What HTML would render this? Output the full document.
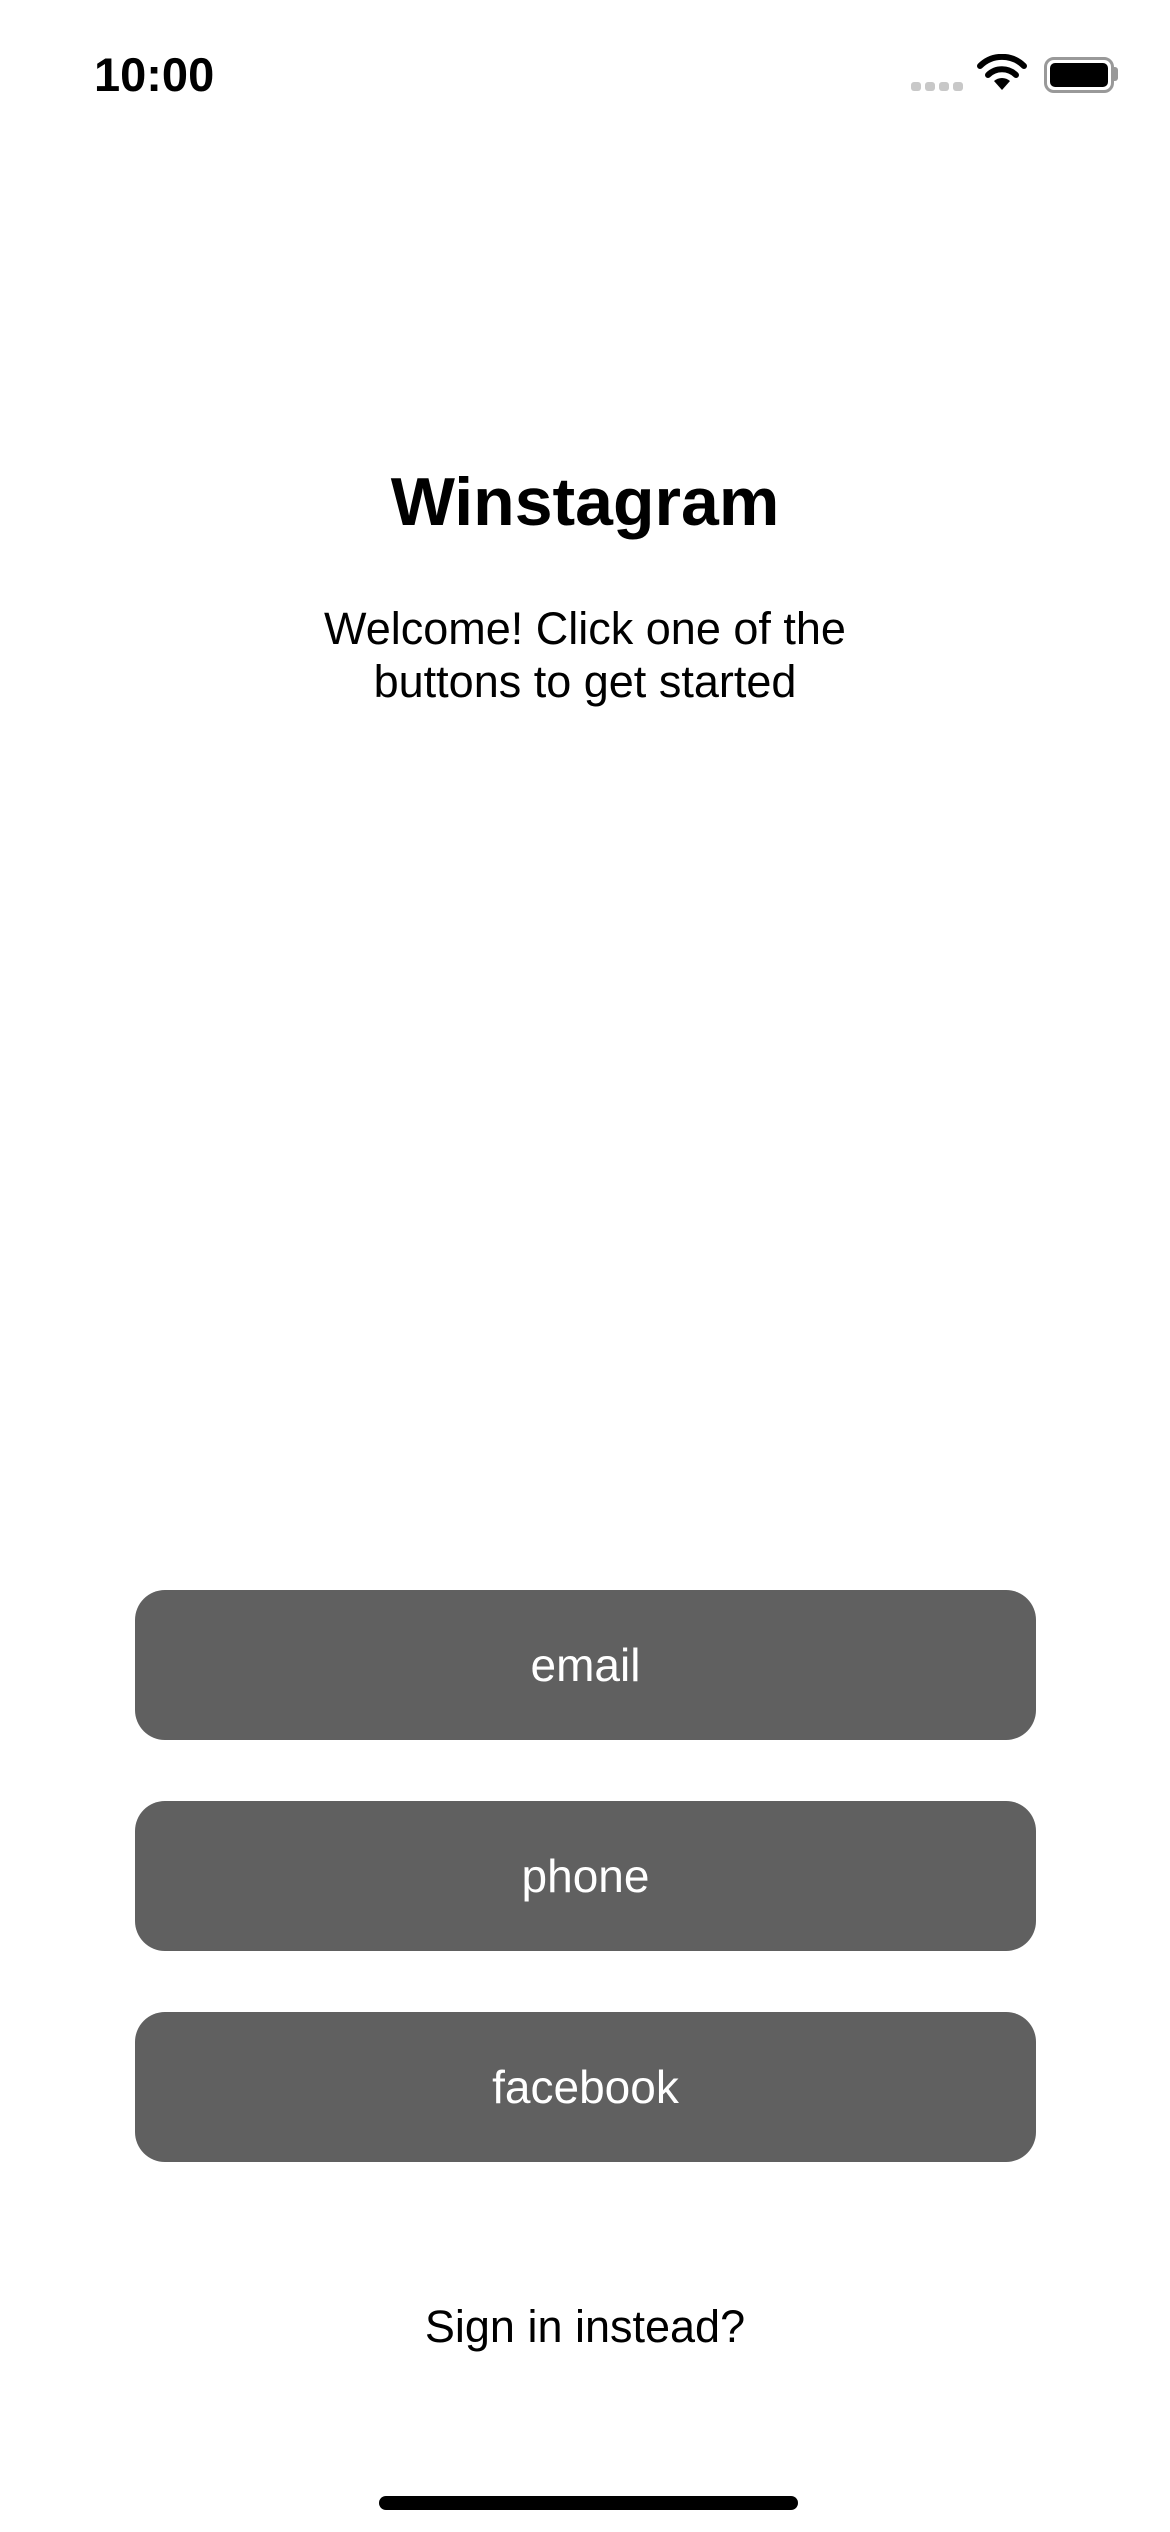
<!DOCTYPE html>
<html><head><meta charset="utf-8"><style>
html,body{margin:0;padding:0;background:#fff;}
body{width:1170px;height:2532px;position:relative;overflow:hidden;font-family:"Liberation Sans",sans-serif;color:#000;}
.a{position:absolute;}
.btn{position:absolute;left:135px;width:901px;height:150px;background:#606060;border-radius:30px;color:#fff;font-size:46px;text-align:center;line-height:150px;}
</style></head><body>
<div class="a" style="left:94px;top:47px;font-size:47px;font-weight:bold;line-height:56px;">10:00</div>
<div class="a" style="left:911px;top:82px;width:10px;height:9px;background:#c8c8c8;border-radius:3px"></div>
<div class="a" style="left:925px;top:82px;width:10px;height:9px;background:#c8c8c8;border-radius:3px"></div>
<div class="a" style="left:939px;top:82px;width:10px;height:9px;background:#c8c8c8;border-radius:3px"></div>
<div class="a" style="left:953px;top:82px;width:10px;height:9px;background:#c8c8c8;border-radius:3px"></div>
<svg class="a" style="left:976px;top:54px" width="52" height="38" viewBox="0 0 52 38">
<path d="M26 36 L18 27 A12 12 0 0 1 34 27 Z" fill="#000"/>
<path d="M12 21 A20 20 0 0 1 40 21" stroke="#000" stroke-width="6" fill="none" stroke-linecap="round"/>
<path d="M4 12 A31 31 0 0 1 48 12" stroke="#000" stroke-width="6" fill="none" stroke-linecap="round"/>
</svg>
<div class="a" style="left:1044px;top:57px;width:64px;height:30px;border:3px solid #999;border-radius:10px;"></div>
<div class="a" style="left:1050px;top:63px;width:58px;height:24px;background:#000;border-radius:5px;"></div>
<div class="a" style="left:1113px;top:67px;width:5px;height:14px;background:#999;border-radius:0 3px 3px 0;"></div>
<div class="a" style="left:0;width:1170px;top:462px;text-align:center;font-size:68px;font-weight:bold;line-height:80px;">Winstagram</div>
<div class="a" style="left:0;width:1170px;top:602px;text-align:center;font-size:45px;line-height:53px;">Welcome! Click one of the<br>buttons to get started</div>
<div class="btn" style="top:1590px">email</div>
<div class="btn" style="top:1801px">phone</div>
<div class="btn" style="top:2012px">facebook</div>
<div class="a" style="left:0;width:1170px;top:2297px;text-align:center;font-size:45px;line-height:60px;">Sign in instead?</div>
<div class="a" style="left:379px;top:2496px;width:419px;height:14px;background:#000;border-radius:7px;"></div>
</body></html>
